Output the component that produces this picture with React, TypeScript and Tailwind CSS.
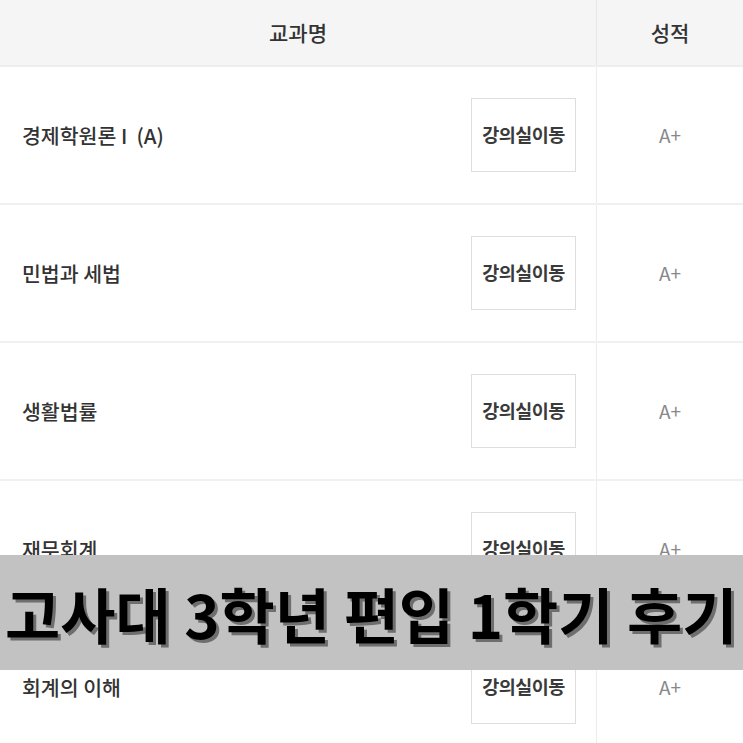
const font = "font-['Noto_Sans_CJK_KR','Noto_Sans',sans-serif]";

const courses = ["경제학원론 I  (A)", "민법과 세법", "생활법률", "재무회계", "회계의 이해"];

function CourseRow({ name }: { name: string }) {
  return (
    <div className="flex h-[138px] border-b-2 border-[#f0f0f0]">
      <div className="flex w-[596px] items-center justify-between pl-[22px] pr-[20px]">
        <span className="whitespace-pre text-[20.5px] font-medium text-[#333]">{name}</span>
        <div className="flex h-[74px] w-[105px] items-center justify-center border border-[#dedede] bg-white text-[18.5px] font-semibold tracking-[-0.5px] text-[#3a3a3a]">
          강의실이동
        </div>
      </div>
      <div className="flex flex-1 items-center justify-center border-l border-[#ececec] text-[19px] font-normal text-[#888]">
        A+
      </div>
    </div>
  );
}

export default function App() {
  return (
    <div className={`relative h-[743px] w-[743px] overflow-hidden bg-white ${font}`}>
      <div className="flex h-[67px] border-b-2 border-[#eeeeee] bg-[#f5f5f5]">
        <div className="flex w-[596px] items-center justify-center text-[21px] font-medium text-[#333]">
          교과명
        </div>
        <div className="flex flex-1 items-center justify-center border-l border-[#e6e6e6] text-[21px] font-medium text-[#333]">
          성적
        </div>
      </div>
      {courses.map((c) => (
        <CourseRow key={c} name={c} />
      ))}
      {/* title banner over the table */}
      <div className="absolute left-0 right-0 top-[555px] flex h-[115px] items-center bg-[#c2c2c2] pl-[5px]">
        <span className="whitespace-nowrap text-[60px] font-bold leading-none text-black [text-shadow:3px_3px_0_#6e6e6e]">
          고사대 3학년 편입 1학기 후기
        </span>
      </div>
    </div>
  );
}
